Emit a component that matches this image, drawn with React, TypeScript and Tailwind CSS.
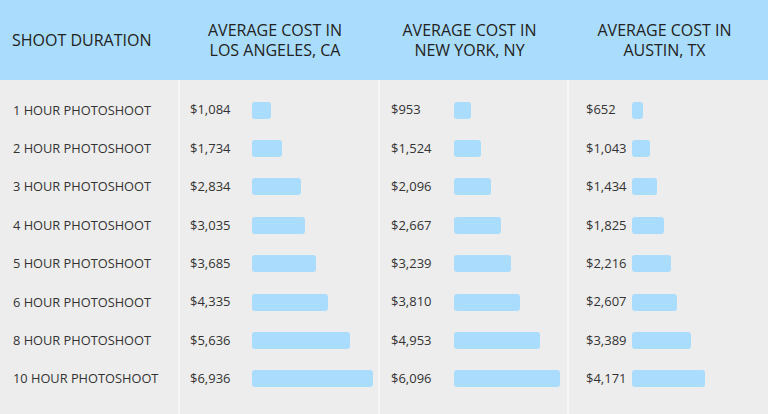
const rows = [
  { label: "1 HOUR PHOTOSHOOT", la: 1084, ny: 953, tx: 652 },
  { label: "2 HOUR PHOTOSHOOT", la: 1734, ny: 1524, tx: 1043 },
  { label: "3 HOUR PHOTOSHOOT", la: 2834, ny: 2096, tx: 1434 },
  { label: "4 HOUR PHOTOSHOOT", la: 3035, ny: 2667, tx: 1825 },
  { label: "5 HOUR PHOTOSHOOT", la: 3685, ny: 3239, tx: 2216 },
  { label: "6 HOUR PHOTOSHOOT", la: 4335, ny: 3810, tx: 2607 },
  { label: "8 HOUR PHOTOSHOOT", la: 5636, ny: 4953, tx: 3389 },
  { label: "10 HOUR PHOTOSHOOT", la: 6936, ny: 6096, tx: 4171 },
];

const MAX = 6936;
const MAX_W = 121;

function fmt(n: number) {
  return "$" + n.toLocaleString("en-US");
}

function CostColumn({
  values,
  pad,
  priceW,
}: {
  values: number[];
  pad: string;
  priceW: string;
}) {
  return (
    <div className={`border-l-2 border-[#f6f6f6] pt-[11px] ${pad}`}>
      {values.map((v, i) => (
        <div key={i} className="flex h-[38.4px] items-center">
          <span className={`${priceW} shrink-0 text-[13px] text-[#333]`}>{fmt(v)}</span>
          <div
            className="h-[17px] rounded-[3px] bg-[#aadcfd]"
            style={{ width: (v / MAX) * MAX_W }}
          />
        </div>
      ))}
    </div>
  );
}

export default function App() {
  return (
    <div
      className="h-[414px] w-[768px] overflow-hidden bg-[#ededed]"
      style={{ fontFamily: '"Open Sans", "Noto Sans", sans-serif' }}
    >
      <div className="grid h-[80px] grid-cols-[178px_200px_189px_1fr] bg-[#aadcfd] text-[16px] leading-[20px] text-[#222]">
        <div className="flex items-center pl-[12px]">SHOOT DURATION</div>
        <div className="flex items-center justify-center pr-[6px] text-center">
          AVERAGE COST IN
          <br />
          LOS ANGELES, CA
        </div>
        <div className="flex items-center justify-center pr-[6px] text-center">
          AVERAGE COST IN
          <br />
          NEW YORK, NY
        </div>
        <div className="flex items-center justify-center pr-[6px] text-center">
          AVERAGE COST IN
          <br />
          AUSTIN, TX
        </div>
      </div>
      <div className="grid h-[334px] grid-cols-[178px_200px_189px_1fr]">
        <div className="pl-[13px] pt-[11px]">
          {rows.map((r) => (
            <div key={r.label} className="flex h-[38.4px] items-center text-[12.8px] text-[#333]">
              {r.label}
            </div>
          ))}
        </div>
        <CostColumn values={rows.map((r) => r.la)} pad="pl-[10px]" priceW="w-[62px]" />
        <CostColumn values={rows.map((r) => r.ny)} pad="pl-[11px]" priceW="w-[63px]" />
        <CostColumn values={rows.map((r) => r.tx)} pad="pl-[17px]" priceW="w-[46px]" />
      </div>
    </div>
  );
}
